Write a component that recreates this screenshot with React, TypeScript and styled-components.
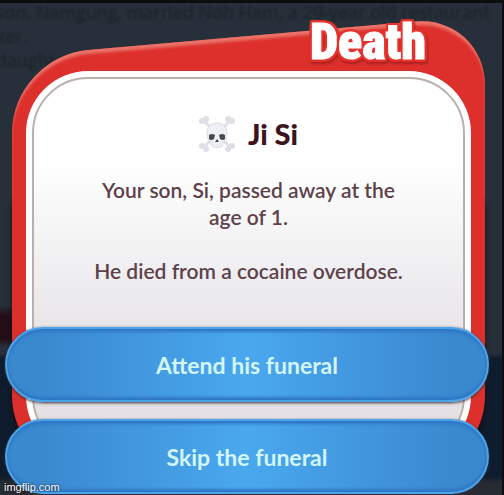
import React from "react";
import styled, { createGlobalStyle } from "styled-components";

const GlobalStyle = createGlobalStyle`
  * { box-sizing: border-box; }
  body { margin: 0; background: #27303a; }
`;

const Screen = styled.main`
  position: relative;
  min-height: 100vh;
  overflow: hidden;
  padding: 33px 13px 0 5px;
  border-top: 3px solid #0b0d0f;
  border-right: 2px solid #0b0d0f;
  background:
    linear-gradient(transparent 302px, #240f18 312px 336px, transparent 344px) left / 40px 100% no-repeat,
    linear-gradient(#27303a 0 350px, #0f1c2e 356px 474px, #272c33 480px);
  font-family: Lato, "Noto Sans", sans-serif;
`;

const Backdrop = styled.div`
  position: absolute;
  inset: -3px auto auto -4px;
  color: #192129;
  font-size: 18px;
  line-height: 24px;
  font-family: "Open Sans", sans-serif;
  white-space: nowrap;
  filter: blur(1px);
  p { margin: 0; }
`;

const Card = styled.article`
  position: relative;
  isolation: isolate;
  margin: 0 4px 0 7px;
  padding: 35px 14px 0;
  height: 422px;
  &::before, &::after {
    content: "";
    position: absolute;
    inset: 0 0 auto;
    z-index: -1;
    height: 240px;
    background: #dd302c;
    border-radius: 76px 70px 0 0;
    transform: skewY(-5deg);
    box-shadow: inset 0 5px 3px -1px #e9756c;
  }
  &::after {
    inset: 160px 0 -14px;
    height: auto;
    border-radius: 0 0 76px 76px;
    transform: none;
    box-shadow: 0 8px 5px #151116;
    clip-path: inset(0 -6px -12px);
  }
`;

const Title = styled.h1`
  position: absolute;
  top: -22px;
  right: 59px;
  margin: 0;
  color: #fff;
  font: 900 50px/56px "Roboto Condensed", "Liberation Sans Narrow", "Arial Narrow", "Noto Sans Condensed", "Open Sans Condensed", "Liberation Sans", sans-serif;
  -webkit-text-stroke: 1px #fff;
  filter: drop-shadow(2px 0 0 #e5322c) drop-shadow(-2px 0 0 #e5322c) drop-shadow(0 2px 0 #e5322c) drop-shadow(0 -2px 0 #e5322c) drop-shadow(1px 2px 1px #a91f20);
`;

const Panel = styled.section`
  height: 100%;
  padding: 6px;
  border-radius: 62px;
  background: #fff;
`;

const Paper = styled.div`
  height: 100%;
  padding: 35px 16px 0;
  border: 2px solid #b9b0ac;
  border-radius: 56px;
  background: linear-gradient(#fff 0 22%, #e8e6e9 66%, #e5e0e4 85%);
  text-align: center;
`;

const Name = styled.h2`
  display: flex;
  align-items: center;
  justify-content: center;
  gap: 13px;
  margin: 0 0 22px;
  color: #3b1420;
  font: 900 29px/40px Lato, sans-serif;
`;

const Message = styled.p`
  margin: 0 0 27px;
  color: #5d424a;
  font-size: 21px;
  line-height: 27px;
  font-weight: 600;
`;

const Choices = styled.div`
  position: relative;
  display: grid;
  gap: 17px;
  margin-top: -131px;
`;

const Choice = styled.button`
  height: 75px;
  border: 2px solid #4ba3ea;
  border-radius: 38px;
  background: linear-gradient(90deg, #3a89cf 8%, #4aa8ef 50%, #3a89cf 92%) border-box;
  box-shadow: inset 0 3px 3px #2f77c6, inset 0 -3px 3px #2f77c6, 0 1px 3px #3a2f35;
  color: #d2f6f6;
  font: bold 23px/28px Lato, sans-serif;
  cursor: pointer;
`;

const Watermark = styled.small`
  position: absolute;
  left: 4px;
  bottom: 0;
  color: #fff;
  font: 11px/16px "Liberation Sans", sans-serif;
  text-shadow: 0 0 2px #000;
`;

const Skull = () => (
  <svg width="36" height="36" viewBox="0 0 36 36" aria-hidden="true">
    <path d="M5 5 31 31M31 5 5 31" stroke="#dfe0e6" strokeWidth="3" />
    <g fill="#dedfe5">
      <circle cx="3" cy="5" r="3" /><circle cx="7" cy="3" r="3" />
      <circle cx="33" cy="5" r="3" /><circle cx="29" cy="3" r="3" />
      <circle cx="3" cy="30" r="3" /><circle cx="7" cy="33" r="3" />
      <circle cx="33" cy="30" r="3" /><circle cx="29" cy="33" r="3" />
    </g>
    <path d="M18 7c-6 0-10 4-10 10 0 4 1 8 4 9l1 4c2 2 8 2 10 0l1-4c3-1 4-5 4-9 0-6-4-10-10-10Z" fill="#eff0f5" stroke="#d9dbe3" />
    <path d="M10 19q3-2 6 0l-1 4q-3 2-5 0ZM20 19q3-2 6 0v4q-2 2-5 0ZM18 23l2 3h-4Z" fill="#484950" />
  </svg>
);

export default function App() {
  return (
    <>
      <GlobalStyle />
      <Screen>
        <Backdrop aria-hidden="true">
          <p>son, Namgung, married Noh Ham, a 29-year old restaurant</p>
          <p>ker.</p>
          <p>daughter</p>
        </Backdrop>
        <Card>
          <Title>Death</Title>
          <Panel>
            <Paper>
              <Name><Skull />Ji Si</Name>
              <Message>Your son, Si, passed away at the<br />age of 1.</Message>
              <Message>He died from a cocaine overdose.</Message>
            </Paper>
          </Panel>
        </Card>
        <Choices>
          <Choice type="button">Attend his funeral</Choice>
          <Choice type="button">Skip the funeral</Choice>
        </Choices>
        <Watermark>imgflip.com</Watermark>
      </Screen>
    </>
  );
}
